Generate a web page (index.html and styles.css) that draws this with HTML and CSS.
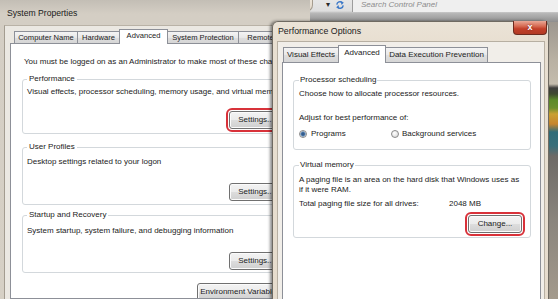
FILE: index.html
```html
<!DOCTYPE html>
<html>
<head>
<meta charset="utf-8">
<title>System Properties</title>
<link rel="stylesheet" href="styles.css">
</head>
<body>
<div class="desk">

  <div class="explorer">
    <div class="xbtn">
      <svg width="9" height="8" viewBox="0 0 9 8">
        <rect x="0.5" y="0.5" width="8" height="7" rx="1.5" fill="#f2ede6" stroke="#cbc3b6"/>
        <path d="M2.6 1.9 L6.4 6.1 M6.4 1.9 L2.6 6.1" stroke="#6f6f6f" stroke-width="1.3"/>
      </svg>
    </div>
    <span class="drop">▾</span>
    <svg class="refresh" width="10" height="10" viewBox="0 0 10 10">
      <path d="M1.8 4.6 A3.2 3.2 0 0 1 7.2 2.6" stroke="#3b78c8" stroke-width="1.4" fill="none"/>
      <path d="M5.6 1.2 L8.8 2.6 L6.6 4.9 Z" fill="#3b78c8"/>
      <path d="M8.2 5.4 A3.2 3.2 0 0 1 2.8 7.4" stroke="#3b78c8" stroke-width="1.4" fill="none"/>
      <path d="M4.4 8.8 L1.2 7.4 L3.4 5.1 Z" fill="#3b78c8"/>
    </svg>
    <div class="search">Search Control Panel</div>
  </div>

  <div class="win sys">
    <div class="titlebar"><span class="title">System Properties</span></div>
    <div class="client">
      <div class="tabs">
        <div class="tab t-cn">Computer Name</div>
        <div class="tab t-hw">Hardware</div>
        <div class="tab sel t-adv">Advanced</div>
        <div class="tab t-sp">System Protection</div>
        <div class="tab t-rm">Remote</div>
      </div>
      <div class="panel">
        <p class="intro">You must be logged on as an Administrator to make most of these changes.</p>
        <fieldset class="group g-perf">
          <legend>Performance</legend>
          <p>Visual effects, processor scheduling, memory usage, and virtual memory</p>
          <div class="btnrow"><button class="btn hl">Settings...</button></div>
        </fieldset>
        <fieldset class="group g-up">
          <legend>User Profiles</legend>
          <p>Desktop settings related to your logon</p>
          <div class="btnrow"><button class="btn">Settings...</button></div>
        </fieldset>
        <fieldset class="group g-sr">
          <legend>Startup and Recovery</legend>
          <p>System startup, system failure, and debugging information</p>
          <div class="btnrow"><button class="btn">Settings...</button></div>
        </fieldset>
        <div class="btnrow env"><button class="btn wide">Environment Variables...</button></div>
      </div>
    </div>
  </div>

  <div class="win perf">
    <div class="titlebar">
      <span class="title">Performance Options</span>
      <div class="close">x</div>
    </div>
    <div class="client">
      <div class="tabs">
        <div class="tab t-ve">Visual Effects</div>
        <div class="tab sel t-adv2">Advanced</div>
        <div class="tab t-dep">Data Execution Prevention</div>
      </div>
      <div class="panel">
        <fieldset class="group g-proc">
          <legend>Processor scheduling</legend>
          <p>Choose how to allocate processor resources.</p>
          <p class="adjust">Adjust for best performance of:</p>
          <div class="radios">
            <label class="radio-item first"><span class="radio on"></span>Programs</label>
            <label class="radio-item"><span class="radio"></span>Background services</label>
          </div>
        </fieldset>
        <fieldset class="group g-vm">
          <legend>Virtual memory</legend>
          <p>A paging file is an area on the hard disk that Windows uses as</p>
          <p>if it were RAM.</p>
          <div class="total"><span class="total-label">Total paging file size for all drives:</span><span>2048 MB</span></div>
          <div class="btnrow"><button class="btn hl">Change...</button></div>
        </fieldset>
      </div>
    </div>
  </div>

</div>
</body>
</html>
```

FILE: styles.css
```css
* { box-sizing: border-box; }

html, body {
  margin: 0;
  padding: 0;
}

body {
  width: 558px;
  height: 299px;
  overflow: hidden;
  font-family: "Liberation Sans", Arial, sans-serif;
  font-size: 8px;
  color: #222;
  background: linear-gradient(to bottom,
    #8c8883 0px, #b9b1a3 60px, #c4bcad 84px,
    #3e3e3c 88px, #3f4a30 94px, #5c8a2a 100px, #6c8f2e 108px,
    #c9a032 114px, #c6852c 124px, #2f6c78 132px, #396f7a 146px,
    #6d6a66 156px, #8a857d 220px, #a39a8c 299px);
}

.desk {
  position: relative;
  width: 558px;
  height: 299px;
  overflow: hidden;
}

/* ---------- background explorer strip ---------- */
.explorer {
  position: absolute;
  left: 272px;
  top: 0;
  width: 286px;
  height: 22px;
  display: flex;
  align-items: flex-start;
  background: linear-gradient(to bottom, #e6e6e6 0, #dedede 11px, #b9b9b9 13px, #8e8e8e 22px);
}

.xbtn {
  width: 41px;
  height: 12px;
  background: linear-gradient(to bottom, #ece4d8, #e0d6c8);
  border-right: 1px solid #a59c8e;
  border-bottom: 1px solid #a59c8e;
  border-bottom-right-radius: 7px;
  display: flex;
  justify-content: center;
  align-items: center;
}

.drop {
  margin-left: 13px;
  font-size: 8px;
  line-height: 10px;
  color: #2a2a2a;
}

.refresh {
  margin: 0 0 0 5px;
}

.search {
  flex: 1;
  height: 12px;
  margin-left: 7px;
  border-left: 1px solid #9c9c9c;
  background: #efefef;
  padding-left: 8px;
  font-style: italic;
  color: #8c8c8c;
  line-height: 10px;
}

/* ---------- windows ---------- */
.win {
  position: absolute;
  overflow: hidden;
}

.sys {
  left: 0;
  top: 0;
  width: 310px;
  height: 299px;
  background: linear-gradient(to bottom, #c3beb5 0, #d4cec4 14px, #d6d0c5 100%);
  padding-left: 4px;
}

.sys .titlebar {
  height: 25px;
  padding: 8px 0 0 3px;
  line-height: 10px;
}

.title {
  font-size: 8.6px;
  color: #1a1a1a;
  white-space: nowrap;
}

.sys .client {
  height: 274px;
  background: #ebe8e2;
  border-left: 1px solid #a39c90;
  border-top: 1px solid #b9b2a6;
  padding: 3px 0 0 5px;
}

.tabs {
  display: flex;
  align-items: flex-end;
  position: relative;
  z-index: 1;
}

.sys .tabs {
  height: 14px;
  padding-left: 4px;
}

.tab {
  display: flex;
  justify-content: center;
  align-items: center;
  white-space: nowrap;
  border: 1px solid #8d9098;
  border-bottom: none;
  background: linear-gradient(to bottom, #f4f4f4, #e8e8e8 50%, #dedede 51%, #d6d6d6);
  margin-left: -1px;
  color: #222;
}

.tab:first-child { margin-left: 0; }

.tab.sel {
  background: #fff;
  position: relative;
  z-index: 2;
  margin-bottom: -1px;
}

.sys .tab {
  height: 12px;
  font-size: 7.6px;
  line-height: 10px;
}

.sys .tab.sel { height: 15px; padding-bottom: 2px; }

.t-cn { width: 64px; }
.t-hw { width: 43px; }
.t-adv { width: 49px; }
.t-sp { width: 72px; }
.t-rm { width: 45px; }

.panel {
  background: #fff;
  border: 1px solid #8d9098;
  overflow: hidden;
}

.sys .panel {
  height: 256px;
  padding: 13px 19px 0 11px;
}

p {
  margin: 0;
  line-height: 10px;
  white-space: nowrap;
}

.intro {
  margin: 0 0 7px 2px;
}

.group {
  margin: 0 0 6px 0;
  min-width: 0;
  border: 1px solid #d3d8dc;
  border-radius: 3px;
  padding: 4px 6px 3px 4px;
}

.group legend {
  padding: 0 2px;
  line-height: 10px;
  white-space: nowrap;
}

.btnrow {
  display: flex;
  justify-content: flex-end;
  margin-top: 15px;
}

/* per-group spacing of the System Properties dialog */
.g-perf { padding-top: 3px; padding-bottom: 4px; margin-bottom: 8px; }
.g-perf .btnrow { margin-top: 14px; }
.g-up { padding-top: 5px; padding-bottom: 3px; margin-bottom: 5px; }
.g-up .btnrow { margin-top: 16px; }
.g-sr { padding-top: 6px; padding-bottom: 2px; margin-bottom: 0; }
.g-sr .btnrow { margin-top: 16px; }

.btn {
  font: inherit;
  color: #1a1a1a;
  width: 54px;
  height: 18px;
  padding: 0;
  border: 1px solid #707070;
  border-radius: 3px;
  background: linear-gradient(to bottom, #f3f3f3 0, #ebebeb 50%, #dddddd 51%, #cfcfcf 100%);
  box-shadow: inset 0 0 0 1px #fbfbfb;
  line-height: 14px;
}

.btn.hl {
  outline: 2px solid #d8323a;
  outline-offset: 1px;
}

.btnrow.env {
  margin-top: 10px;
}

.btn.wide {
  width: 93px;
}

/* ---------- performance options ---------- */
.perf {
  left: 272px;
  top: 21px;
  width: 277px;
  height: 278px;
  z-index: 5;
  background: linear-gradient(to bottom, #ebe3d7 0, #e8dfd1 20px, #e6dccd 100%);
  border: 1px solid #6f6a62;
  border-bottom: none;
  border-radius: 6px 6px 0 0;
  padding: 0 3px 0 4px;
  box-shadow: -2px 0 3px rgba(0, 0, 0, 0.45);
  overflow: visible;
}

.perf .titlebar {
  display: flex;
  align-items: flex-start;
  height: 19px;
  padding: 4px 0 0 1px;
  line-height: 10px;
}

.perf .title { font-size: 8.8px; }

.close {
  margin: -5px -2px 0 auto;
  width: 34px;
  height: 14px;
  border: 1px solid #6d2b1f;
  border-top: none;
  border-radius: 0 0 4px 4px;
  background: linear-gradient(to bottom, #e9a896 0, #d66a52 40%, #c2402a 60%, #b23a24 100%);
  color: #fff;
  font-weight: bold;
  font-size: 9px;
  line-height: 12px;
  text-align: center;
  text-shadow: 0 0 2px #6a1a10;
}

.perf .client {
  height: 259px;
  background: #f1eee9;
  border: 1px solid #b7afa2;
  border-bottom: none;
  padding: 3px 3px 0 4px;
}

.perf .tabs {
  height: 17px;
  padding-left: 1px;
}

.perf .tab {
  height: 15px;
  font-size: 8px;
  line-height: 10px;
}

.perf .tab.sel { height: 18px; padding-bottom: 3px; }

.t-ve { width: 56px; }
.t-adv2 { width: 48px; }
.t-dep { width: 103px; }

.perf .panel {
  height: 238px;
  padding: 12px 9px 0 10px;
}

.perf .group {
  padding: 4px 8px 4px 5px;
}

.perf .group legend {
  padding: 0 1px;
}

.perf .g-proc {
  padding-bottom: 10px;
  margin-bottom: 10px;
}

.perf .g-vm {
  padding-top: 5px;
}

.adjust {
  margin-top: 14px;
}

.radios {
  display: flex;
  margin-top: 6px;
  line-height: 10px;
}

.radio-item {
  display: flex;
  align-items: center;
  white-space: nowrap;
}

.radio-item.first {
  width: 92px;
}

.radio {
  width: 8px;
  height: 8px;
  border-radius: 50%;
  border: 1px solid #8a8a8a;
  background: radial-gradient(circle at 40% 35%, #ffffff 0, #e6e6e6 60%, #cfcfcf 100%);
  margin-right: 4px;
}

.radio-item:not(.first) .radio { margin-right: 3px; }

.radio.on {
  background: radial-gradient(circle at 50% 50%, #2f4f78 0, #3d6a9e 1.5px, #9bb6d2 2.6px, #e8e8e8 3px, #d0d0d0 100%);
}

.total {
  display: flex;
  margin-top: 4px;
  line-height: 10px;
  white-space: nowrap;
}

.total-label {
  width: 150px;
}

.g-vm .btnrow {
  margin-top: 6px;
}
```
